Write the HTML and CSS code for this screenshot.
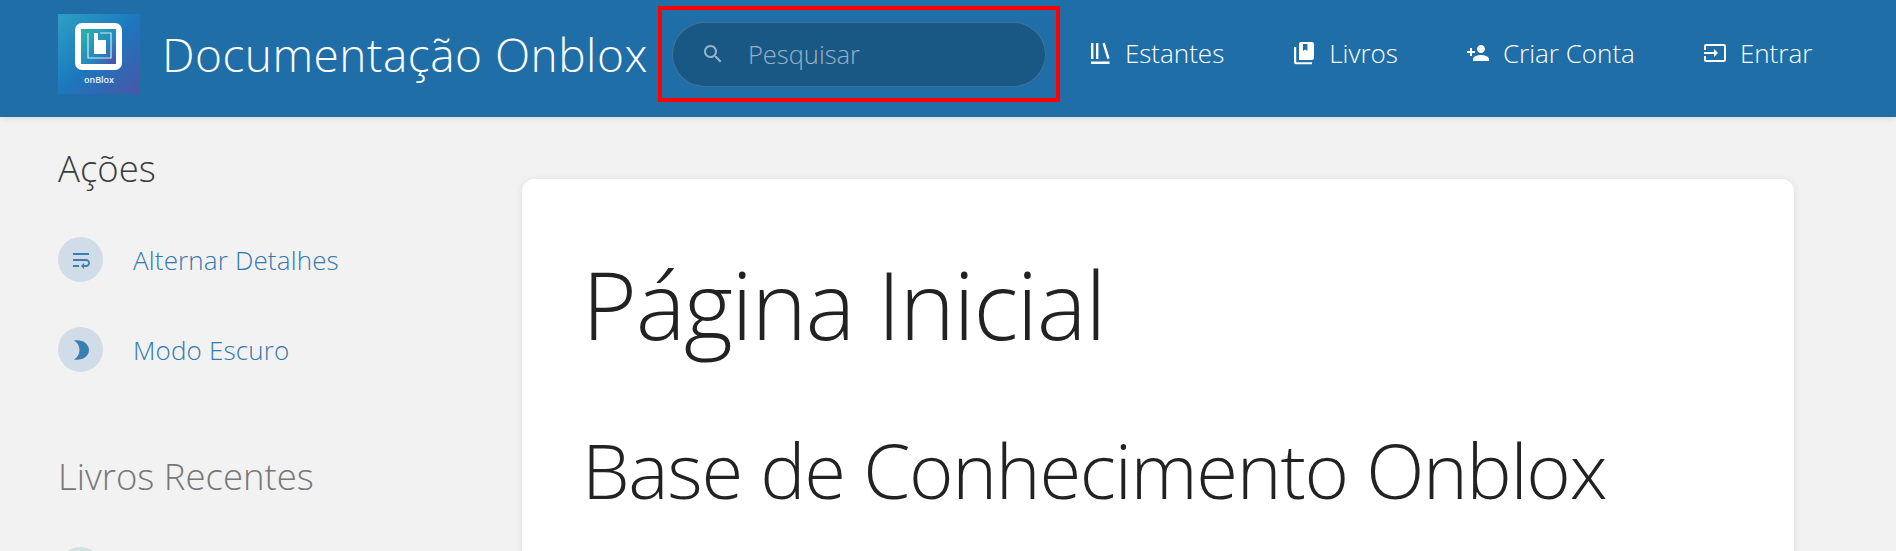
FILE: index.html
```html
<!DOCTYPE html>
<html lang="pt-BR">
<head>
<meta charset="utf-8">
<title>Documentação Onblox</title>
<link rel="stylesheet" href="styles.css">
</head>
<body>
<header class="header">
  <a class="brand" href="#">
    <svg class="logo" viewBox="0 0 82 80" aria-hidden="true">
      <defs>
        <linearGradient id="lg1" x1="0" y1="0" x2="1" y2="1"><stop offset="0" stop-color="#2f9fc4"/><stop offset=".5" stop-color="#1b78bd"/><stop offset="1" stop-color="#4a55a8"/></linearGradient>
        <linearGradient id="lg2" x1="0" y1="0" x2="1" y2="1"><stop offset="0" stop-color="#2cb5a8"/><stop offset=".6" stop-color="#2488c0"/><stop offset="1" stop-color="#4f4ba6"/></linearGradient>
      </defs>
      <rect width="82" height="80" fill="url(#lg1)"/>
      <rect x="17" y="9" width="47" height="47" rx="7" fill="#fff"/>
      <rect x="23" y="15" width="35" height="35" fill="url(#lg2)"/>
      <path d="M30 19v25h23V19H42" fill="none" stroke="#cdeef0" stroke-width="1.2"/>
      <path d="M36 19h4v7h8v14H36z" fill="#fff"/>
      <text x="41" y="69" text-anchor="middle" class="logo-text">onBlox</text>
    </svg>
    <span class="brand-name">Documentação Onblox</span>
  </a>
  <div class="search-mark">
    <div class="search">
      <svg class="search-icon" viewBox="0 0 24 24"><path d="M15.5 14h-.79l-.28-.27C15.41 12.59 16 11.11 16 9.5 16 5.91 13.09 3 9.5 3S3 5.91 3 9.5 5.91 16 9.5 16c1.61 0 3.09-.59 4.23-1.57l.27.28v.79l5 4.99L20.49 19l-4.99-5zm-6 0C7.01 14 5 11.99 5 9.5S7.01 5 9.5 5 14 7.01 14 9.5 11.99 14 9.5 14z"/></svg>
      <span class="search-text">Pesquisar</span>
    </div>
  </div>
  <nav class="nav">
    <a class="nav-link" href="#">
      <svg class="nav-icon" viewBox="0 0 24 24"><path d="M3 2h2.400v16H3zM8 2h2.400v16H8zM14.500 2.500l2.300-.7L21.600 17.300l-2.300.7zM3 20.500h18.500V23H3z"/></svg>
      <span>Estantes</span>
    </a>
    <a class="nav-link" href="#">
      <svg class="nav-icon" viewBox="0 0 24 24"><path d="M9 1h11a2 2 0 0 1 2 2v14a2 2 0 0 1-2 2H7V3a2 2 0 0 1 2-2zm2 2v7l2.200-1.600L15.400 10V3z" fill-rule="evenodd"/><path d="M2 6h2.200v15.200h15.800v2H4a2 2 0 0 1-2-2z"/></svg>
      <span>Livros</span>
    </a>
    <a class="nav-link" href="#">
      <svg class="nav-icon" viewBox="0 0 24 24"><path d="M15 12c2.210 0 4-1.790 4-4s-1.790-4-4-4-4 1.790-4 4 1.790 4 4 4zm-9-2V7H4v3H1v2h3v3h2v-3h3v-2H6zm9 4c-2.670 0-8 1.340-8 4v2h16v-2c0-2.660-5.330-4-8-4z"/></svg>
      <span>Criar Conta</span>
    </a>
    <a class="nav-link" href="#">
      <svg class="nav-icon" viewBox="0 0 24 24"><path d="M21 3.010H3c-1.100 0-2 .9-2 2V9h2V4.990h18v14.030H3V15H1v4.010c0 1.100.9 1.980 2 1.980h18c1.100 0 2-.88 2-1.980v-14c0-1.110-.9-2-2-2zM11 16l4-4-4-4v3H1v2h10v3z"/></svg>
      <span>Entrar</span>
    </a>
  </nav>
</header>
<main class="layout">
  <aside class="sidebar">
    <h5 class="side-title">Ações</h5>
    <ul class="actions">
      <li class="action">
        <span class="action-circle"><svg class="action-icon" viewBox="0 0 24 24"><path d="M4 19h6v-2H4v2zM20 5H4v2h16V5zm-3 6H4v2h13.250c1.100 0 2 .9 2 2s-.9 2-2 2H15v-2l-3 3 3 3v-2h2c2.210 0 4-1.790 4-4s-1.790-4-4-4z"/></svg></span>
        <span class="action-text">Alternar Detalhes</span>
      </li>
      <li class="action">
        <span class="action-circle"><svg class="action-icon" viewBox="0 0 24 24"><path d="M5 2.500c8-1.500 15 3 15 9.500s-7 11-15 9.500c3.500-2 5.500-5.700 5.500-9.500S8.500 4.500 5 2.500z"/></svg></span>
        <span class="action-text">Modo Escuro</span>
      </li>
    </ul>
    <h5 class="side-title recent">Livros Recentes</h5>
    <div class="recent-item"></div>
  </aside>
  <article class="card">
    <h1 class="page-title">Página Inicial</h1>
    <h2 class="page-sub">Base de Conhecimento Onblox</h2>
  </article>
</main>
</body>
</html>
```
FILE: styles.css
```css
* { box-sizing: border-box; }
html, body { margin: 0; height: 551px; overflow: hidden; }
body {
  background: #f2f2f2;
  font-family: "Open Sans", "Noto Sans", "Liberation Sans", sans-serif;
  font-weight: 300;
}
a { color: inherit; text-decoration: none; }

.header {
  display: flex;
  align-items: center;
  height: 117px;
  padding: 0 0 9px 58px;
  background: #206ea7;
  color: #fff;
  box-shadow: 0 1px 6px rgba(0, 0, 0, .12);
  position: relative;
}
.brand { display: flex; align-items: center; gap: 22px; }
.logo { width: 82px; height: 80px; flex: none; }
.logo-text { font-family: "Open Sans", sans-serif; font-size: 9px; font-weight: 600; fill: #e8f2fa; }
.brand-name { font-size: 46px; letter-spacing: .5px; white-space: nowrap; }

.search-mark {
  margin-left: 10px;
  width: 402px;
  height: 96px;
  border: 4px solid #f00;
  display: flex;
  align-items: center;
  justify-content: center;
  flex: none;
}
.search {
  display: flex;
  align-items: center;
  width: 374px;
  height: 65px;
  border-radius: 33px;
  background: rgba(0, 0, 0, .2);
  border: 1px solid rgba(255, 255, 255, .16);
  padding-left: 28px;
  gap: 23px;
}
.search-icon { width: 24px; height: 24px; fill: rgba(255, 255, 255, .55); flex: none; }
.search-text { font-size: 25.500px; color: rgba(255, 255, 255, .55); }

.nav { display: flex; align-items: center; margin: -2px 0 0 28px; gap: 68px; }
.nav-link { display: flex; align-items: center; gap: 13px; font-size: 26px; white-space: nowrap; }
.nav-icon { width: 24px; height: 24px; fill: #fff; flex: none; }

.layout {
  display: grid;
  grid-template-columns: 464px 1272px;
  height: 434px;
  overflow: hidden;
  padding: 62px 0 0 58px;
}
.sidebar { min-width: 0; }
.side-title { margin: -36px 0 0; font-size: 36.500px; font-weight: 300; line-height: 50px; color: #3c3c3c; }
.side-title.recent { margin-top: 79px; color: #777; }
.actions { list-style: none; margin: 44px 0 0; padding: 0; display: flex; flex-direction: column; gap: 45px; }
.action { display: flex; align-items: center; gap: 30px; height: 45px; }
.action-circle {
  width: 45px;
  height: 45px;
  border-radius: 50%;
  background: #d0dde8;
  display: flex;
  align-items: center;
  justify-content: center;
  flex: none;
}
.action-icon { width: 24px; height: 24px; fill: #3a7fb3; }
.action-text { font-size: 26px; letter-spacing: .15px; color: #3479ae; }
.recent-item { width: 45px; height: 45px; border-radius: 50%; background: #d3e2e0; margin-top: 46px; }

.card {
  background: #fff;
  border-radius: 12px;
  box-shadow: 0 1px 6px rgba(0, 0, 0, .1);
  height: 500px;
  padding: 62px 60px 0;
  color: #222;
}
.page-title { margin: -2px 0 0; font-size: 94px; font-weight: 300; line-height: 130px; letter-spacing: -1.350px; }
.page-sub { margin: 48px 0 0; font-size: 76px; font-weight: 300; line-height: 106px; letter-spacing: -1.300px; white-space: nowrap; }
```
